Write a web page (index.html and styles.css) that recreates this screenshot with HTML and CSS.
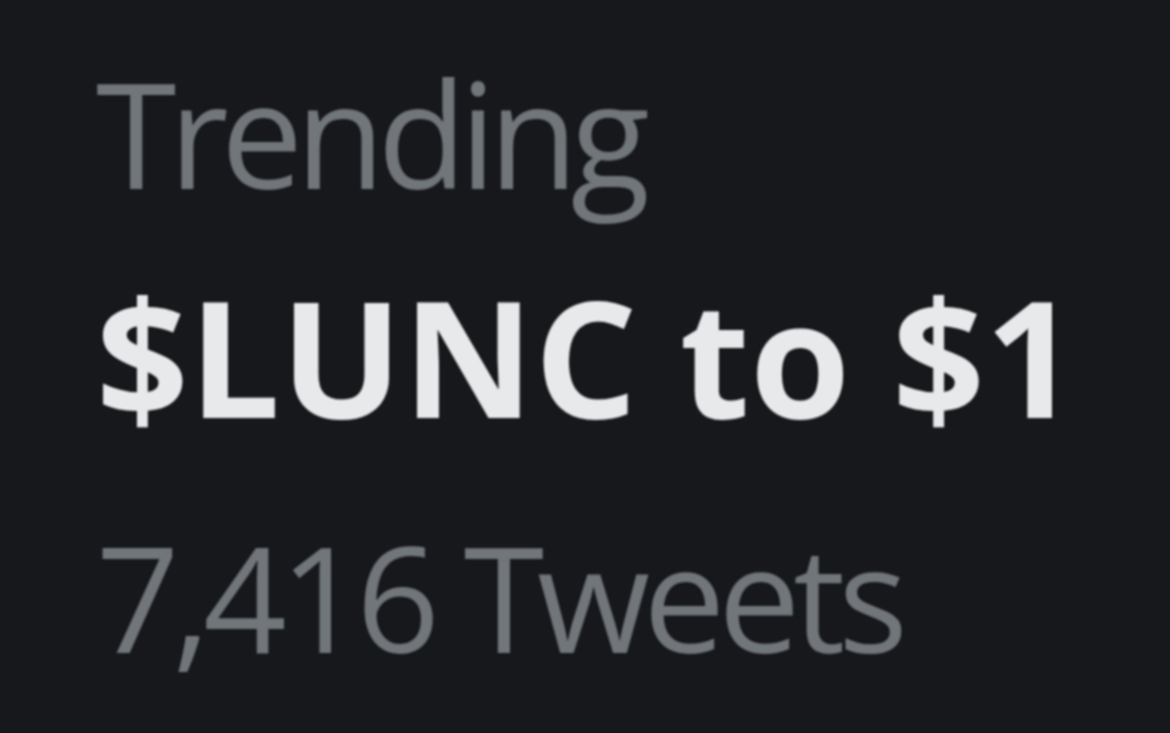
FILE: index.html
```html
<!DOCTYPE html>
<html lang="en">
<head>
  <meta charset="UTF-8" />
  <title>Trending</title>
  <link rel="stylesheet" href="styles.css">
</head>
<body>
  <div class="trend">
    <div class="trend-label">Trending</div>
    <div class="trend-title">$LUNC to $1</div>
    <div class="trend-count">7,416 Tweets</div>
  </div>
</body>
</html>
```

FILE: styles.css
```css
html, body {
  margin: 0;
  height: 100%;
}

body {
  background: #16181c;
  font-family: 'Open Sans', 'Noto Sans', sans-serif;
  overflow: hidden;
}

.trend {
  padding: 26px 0 0 96px;
  display: flex;
  flex-direction: column;
  filter: blur(1.2px);
}

.trend-label {
  color: #71767b;
  font-size: 146px;
  line-height: 214px;
  letter-spacing: -7.5px;
}

.trend-title {
  color: #e7e9ea;
  font-size: 162px;
  font-weight: 700;
  line-height: 230px;
  letter-spacing: 0;
}

.trend-count {
  margin-top: 12px;
  color: #71767b;
  font-size: 146px;
  line-height: 230px;
  letter-spacing: -7px;
}
```
